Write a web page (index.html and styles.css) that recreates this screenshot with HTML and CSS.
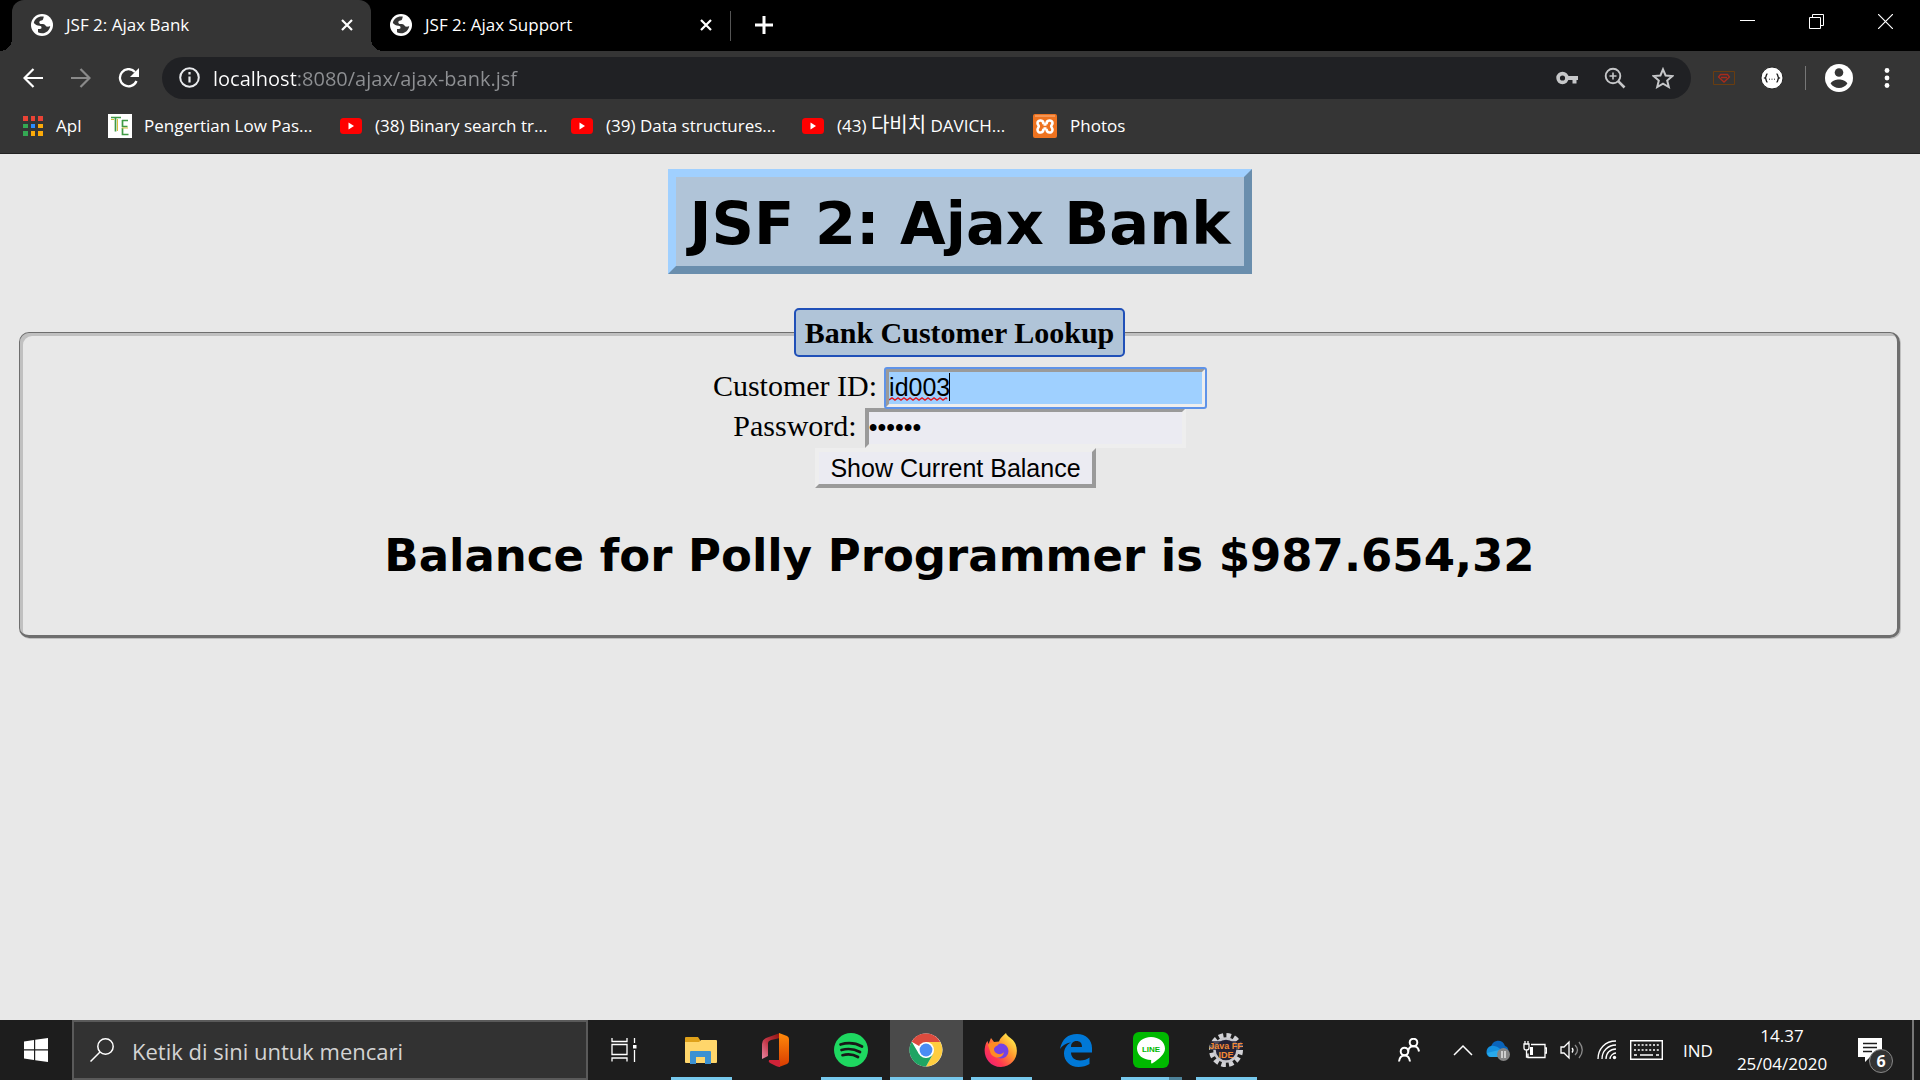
FILE: index.html
```html
<!DOCTYPE html>
<html lang="id">
<head>
<meta charset="utf-8">
<title>JSF 2: Ajax Bank</title>
<link rel="stylesheet" href="styles.css">
</head>
<body>
<svg class="defs" aria-hidden="true">
  <symbol id="globe" viewBox="0 0 22 22">
    <circle cx="11" cy="11" r="11" fill="#fff"/>
    <path d="M13 2.800C8 1.800 3.800 4.500 2.800 9c1.500 1.500 3.200 2.800 5.700 2.800 1.300 0 2 .7 2 1.900 0 1.500-2 1.300-3.500 1.300v3.300c1.200.7 2.600 1 4 1 4.300 0 7.800-3.200 8.200-7.300-1.500 1-4 1-4.700-.5-.7-1.400-2-1.500-4-1.500-1.500 0-2.200-.7-2.200-1.800 0-1.700 2-1.500 3-1.900 1.500-.6.500-2.500 1.700-3.500z" fill="#353535"/>
    <path d="M5 12.200c1 .8 3 .3 3.800 1.300.3 1-2.300 1-2.800 2.300z" fill="#fff"/>
  </symbol>
  <symbol id="cross" viewBox="0 0 12 12"><path d="M1 1l10 10M11 1L1 11" stroke="#fff" stroke-width="2.200"/></symbol>
  <symbol id="youtube" viewBox="0 0 22 16"><rect width="22" height="16" rx="3.500" fill="#f00"/><path d="M8.500 4.500v7L14 8z" fill="#fff"/></symbol>
</svg>

<header class="browser">
  <div class="tab-strip">
    <div class="tab tab-active">
      <svg class="favicon"><use href="#globe"/></svg>
      <span class="tab-title">JSF 2: Ajax Bank</span>
      <button class="tab-close" aria-label="Tutup tab"><svg width="12" height="12"><use href="#cross"/></svg></button>
    </div>
    <div class="tab">
      <svg class="favicon"><use href="#globe"/></svg>
      <span class="tab-title">JSF 2: Ajax Support</span>
      <button class="tab-close" aria-label="Tutup tab"><svg width="12" height="12"><use href="#cross"/></svg></button>
    </div>
    <span class="tab-divider"></span>
    <button class="new-tab" aria-label="Tab baru"><svg width="18" height="18" viewBox="0 0 18 18"><path d="M9 0v18M0 9h18" stroke="#fff" stroke-width="3"/></svg></button>
    <div class="window-controls">
      <button aria-label="Minimalkan"><svg width="15" height="15" viewBox="0 0 15 15"><path d="M0 6.500h15" stroke="#fff"/></svg></button>
      <button aria-label="Pulihkan"><svg width="15" height="15" viewBox="0 0 15 15"><path d="M.5 3.500h11v11H.5zM3.500 3.500v-3h11v11h-3" fill="none" stroke="#fff"/></svg></button>
      <button aria-label="Tutup"><svg width="15" height="15" viewBox="0 0 15 15"><path d="M0 0l15 15M15 0L0 15" stroke="#fff" stroke-width="1.200"/></svg></button>
    </div>
  </div>

  <div class="toolbar">
    <nav class="history">
      <button aria-label="Kembali"><svg width="20" height="20" viewBox="0 0 20 20"><path d="M20 10H2M10.500 1L1.500 10l9 9" fill="none" stroke="#fff" stroke-width="2.200"/></svg></button>
      <button aria-label="Maju"><svg width="20" height="20" viewBox="0 0 20 20"><path d="M0 10h18M9.500 1l9 9-9 9" fill="none" stroke="#8a8a8a" stroke-width="2.200"/></svg></button>
      <button aria-label="Muat ulang"><svg width="22" height="20" viewBox="0 0 22 20"><path d="M18.500 13A8.600 8.600 0 1 1 17 4" fill="none" stroke="#fff" stroke-width="2.300"/><path d="M21 0v9h-9z" fill="#fff"/></svg></button>
    </nav>
    <div class="omnibox">
      <svg width="21" height="21" viewBox="0 0 21 21"><circle cx="10.500" cy="10.500" r="9.300" fill="none" stroke="#e8eaed" stroke-width="2"/><path d="M10.500 9.500v6M10.500 5v2.400" stroke="#e8eaed" stroke-width="2.200"/></svg>
      <input class="address" type="text" aria-label="Alamat" value="localhost:8080/ajax/ajax-bank.jsf" spellcheck="false">
      <div class="omnibox-actions">
        <button aria-label="Sandi"><svg width="22" height="22" viewBox="0 0 22 22"><circle cx="6.500" cy="11" r="4.400" fill="none" stroke="#c6c7c9" stroke-width="3.600"/><path d="M11 9h11v4h-1.500v3.500h-4V13H11z" fill="#c6c7c9"/></svg></button>
        <button aria-label="Zoom"><svg width="22" height="22" viewBox="0 0 22 22"><circle cx="9" cy="9" r="7.300" fill="none" stroke="#c6c7c9" stroke-width="1.900"/><path d="M14.200 14.200l6.300 6.300" stroke="#c6c7c9" stroke-width="2.600"/><path d="M9 5.500v7M5.500 9h7" stroke="#c6c7c9" stroke-width="1.600"/></svg></button>
        <button aria-label="Beri bintang"><svg width="22" height="22" viewBox="0 0 22 22"><path d="M11 2.300l2.600 6.200 6.700.6-5.100 4.400 1.600 6.500L11 16.600l-5.800 3.400 1.600-6.500-5.100-4.400 6.700-.6z" fill="none" stroke="#c6c7c9" stroke-width="2"/></svg></button>
      </div>
    </div>
    <div class="extensions">
      <button aria-label="Ekstensi"><svg width="24" height="24" viewBox="0 0 24 24"><path d="M1.500 5.500h21v13h-21z" fill="none" stroke="#693d10"/><path d="M8.500 8.500h7l2 2.500-5.500 5-5.500-5zM9 11.500h6" fill="none" stroke="#a82b1c" stroke-width="1.300"/></svg></button>
      <button aria-label="Ekstensi JSON"><svg width="24" height="24" viewBox="0 0 24 24"><circle cx="12" cy="12" r="11" fill="#fff" stroke="#222" stroke-width="1"/><path d="M7.500 8c-2 0-.5 3-2.500 4 2 1 .5 4 2.500 4M16.500 8c2 0 .5 3 2.500 4-2 1-.5 4-2.500 4" fill="none" stroke="#222" stroke-width="1.400"/><path d="M9 13.200h1M11.500 13.200h1M14 13.200h1" stroke="#222" stroke-width="1"/></svg></button>
      <span class="toolbar-divider"></span>
      <button aria-label="Profil"><svg width="28" height="28" viewBox="0 0 28 28"><circle cx="14" cy="14" r="14" fill="#fff"/><circle cx="14" cy="8.500" r="4.300" fill="#353535"/><path d="M5.600 19.500C7 16.800 11 15.500 14 15.500s7 1.300 8.400 4c-2 2.800-5 4.500-8.400 4.500s-6.400-1.700-8.400-4.500z" fill="#353535"/></svg></button>
      <button aria-label="Menu"><svg width="6" height="22" viewBox="0 0 6 22"><circle cx="3" cy="3.500" r="2.400" fill="#fff"/><circle cx="3" cy="11" r="2.400" fill="#fff"/><circle cx="3" cy="18.500" r="2.400" fill="#fff"/></svg></button>
    </div>
  </div>

  <nav class="bookmarks">
    <a class="bookmark bookmark-apps" href="#"><svg width="20" height="20" viewBox="0 0 20 20"><path d="M0 0h5v5H0zM8 0h4v5H8zM15 0h5v5h-5z" fill="#ea4335"/><path d="M0 8h5v4H0zM0 15h5v5H0z" fill="#34a853"/><path d="M8 8h4v4H8z" fill="#2a8cff"/><path d="M15 8h5v4h-5zM8 15h4v5H8zM15 15h5v5h-5z" fill="#fbaa09"/></svg><span>Apl</span></a>
    <a class="bookmark bookmark-site" href="#"><svg width="24" height="24" viewBox="0 0 24 24"><path d="M0 0h24v24H0z" fill="#fff"/><path d="M3 3.500h10M7.500 4v13.500M14 6.500h6M14.500 6v6.500h5M14.500 14v6.500h6" fill="none" stroke="#3f9a45" stroke-width="1.700"/><path d="M9.500 5v12M14 14h6M3 5.500h3" fill="none" stroke="#d6bd3d"/></svg><span>Pengertian Low Pas...</span></a>
    <a class="bookmark" href="#"><svg width="22" height="16"><use href="#youtube"/></svg><span>(38) Binary search tr...</span></a>
    <a class="bookmark" href="#"><svg width="22" height="16"><use href="#youtube"/></svg><span>(39) Data structures...</span></a>
    <a class="bookmark" href="#"><svg width="22" height="16"><use href="#youtube"/></svg><span>(43) <span class="hangul" lang="ko">다비치</span> DAVICH...</span></a>
    <a class="bookmark" href="#"><svg width="24" height="24" viewBox="0 0 24 24"><rect width="24" height="24" rx="2" fill="#ee7320"/><path d="M2 2h20" stroke="#fbb98a" stroke-width="1"/><path d="M10.500 10.500h3M10.500 14.500h3M10.500 10.500C11 5.500 4.500 5.500 4.500 9c0 1.800 1.300 2 1.300 3.200s-1.300 1.800-1.300 3.600c0 4 6.500 3.700 6-1.300M13.500 10.500C13 5.500 19.500 5.500 19.500 9c0 1.800-1.300 2-1.300 3.200s1.300 1.800 1.300 3.600c0 4-6.500 3.700-6-1.300" fill="none" stroke="#fff" stroke-width="2.600"/></svg><span>Photos</span></a>
  </nav>
</header>

<main class="page">
  <h1 class="title">JSF 2: Ajax Bank</h1>
  <form class="lookup-form">
    <fieldset class="lookup">
      <legend>Bank Customer Lookup</legend>
      <div class="field-row">
        <label for="customer-id">Customer ID:</label>
        <span class="focused-field">
          <input class="field field-active" id="customer-id" type="text" value="id003" spellcheck="false">
          <svg class="squiggle" width="61" height="4" viewBox="0 0 61 4"><path d="M0 3l3-2 3 2 3-2 3 2 3-2 3 2 3-2 3 2 3-2 3 2 3-2 3 2 3-2 3 2 3-2 3 2 3-2 3 2 3-2 1 1" fill="none" stroke="#e01b24" stroke-width="1.500"/></svg>
          <span class="caret"></span>
        </span>
      </div>
      <div class="field-row">
        <label for="password">Password:</label>
        <input class="field" id="password" type="password" value="secret">
      </div>
      <div class="field-row field-row-button">
        <button class="submit" type="button">Show Current Balance</button>
      </div>
      <h2 class="balance">Balance for Polly Programmer is $987.654,32</h2>
    </fieldset>
  </form>
</main>

<footer class="taskbar">
  <button class="start" aria-label="Mulai"><svg width="24" height="24" viewBox="0 0 24 24"><path d="M0 3.500L10 2v9.300H0zM11.200 1.800L24 0v11.300H11.200zM0 12.500h10V22L0 20.600zM11.200 12.500H24V24l-12.800-1.800z" fill="#fff"/></svg></button>
  <div class="search">
    <svg width="24" height="24" viewBox="0 0 24 24"><circle cx="15.500" cy="8.500" r="7.700" fill="none" stroke="#fff" stroke-width="1.500"/><path d="M10 14L.5 23.500" stroke="#fff" stroke-width="1.500"/></svg>
    <input type="text" aria-label="Cari" placeholder="Ketik di sini untuk mencari">
  </div>
  <div class="apps">
    <button class="app task-view" aria-label="Tampilan tugas"><svg width="26" height="24" viewBox="0 0 26 24"><path d="M1 0v3.500h15V0M1 23.500V20h15v3.500M1 6.500h15v10H1zM23.500 0v5M23.500 12v12" fill="none" stroke="#fff" stroke-width="1.300"/><path d="M22 7h3.500v3.500H22z" fill="#fff"/></svg></button>
    <button class="app running" aria-label="File Explorer"><svg width="32" height="28" viewBox="0 0 32 28"><path d="M0 2q0-1 1-1h12l2 3v4H0z" fill="#dfa11a"/><path d="M0 6h14l2-2h15q1 0 1 1v21q0 1-1 1H1q-1 0-1-1z" fill="#ffd66b"/><path d="M5 28V16q0-1 1-1h19q1 0 1 1v12h-6v-7h-9v7z" fill="#3c91d2"/></svg></button>
    <button class="app" aria-label="Office"><svg width="30" height="34" viewBox="0 0 30 34"><defs><linearGradient id="office-left" x1="0" y1="1" x2="1" y2="0"><stop stop-color="#e889a5"/><stop offset=".45" stop-color="#c43748"/><stop offset="1" stop-color="#8c120d"/></linearGradient><linearGradient id="office-right" x1="0" y1="0" x2="0" y2="1"><stop stop-color="#ff8a0a"/><stop offset="1" stop-color="#d83b01"/></linearGradient></defs><path d="M19 0L5 5Q1 7 1 11v15l6-3V10q0-2 3-3l9-2z" fill="url(#office-left)"/><path d="M18 0l8 3q2 1 2 3v22q0 2-2 3l-8 3V4z" fill="url(#office-right)"/><path d="M8 27h11v7q-2 0-4-1l-6-3q-2-1-1-3z" fill="#cf2338"/></svg></button>
    <button class="app running" aria-label="Spotify"><svg width="34" height="34" viewBox="0 0 34 34"><circle cx="17" cy="17" r="17" fill="#1ed760"/><path d="M6.500 11.500c7-2 15-1.500 21.500 2M7.500 17c6-1.700 13-1 18.500 2M8.500 22.200c5.300-1.400 11-.8 15.500 1.800" fill="none" stroke="#181818" stroke-width="2.700" stroke-linecap="round"/></svg></button>
    <button class="app running current" aria-label="Chrome"><svg width="34" height="34" viewBox="0 0 34 34"><circle cx="17" cy="17" r="16.500" fill="#fff"/><path d="M17 17L2.700 8.700A16.500 16.500 0 0 1 31.300 9H17z" fill="#dc4b3e"/><path d="M17 9h14.300A16.500 16.500 0 0 1 17 33.500L24 21z" fill="#ffcd40"/><path d="M2.700 8.700A16.500 16.500 0 0 0 17 33.500L24 21l-7 4-7-4z" fill="#1fa463"/><circle cx="17" cy="17" r="8" fill="#fff"/><circle cx="17" cy="17" r="6.400" fill="#4a8cf5"/></svg></button>
    <button class="app running" aria-label="Firefox"><svg width="34" height="34" viewBox="0 0 34 34"><defs><linearGradient id="fox" x1="1" y1="0" x2="0" y2="1"><stop offset=".1" stop-color="#fff44f"/><stop offset=".4" stop-color="#ff9a2e"/><stop offset=".7" stop-color="#ff3750"/><stop offset="1" stop-color="#e31587"/></linearGradient></defs><path d="M22 0c1 4 7 5 9.500 11C36 22 29 34 17 34S-1 23 1 14c.5-3 1.500-5 2.500-6l1 3L7 5l3 4 5-.5C16 5 19 3 22 0z" fill="url(#fox)"/><circle cx="17" cy="18" r="7.500" fill="#7542e5"/><path d="M4 12c4-4 8-3 11-2 0 3-5 3-5 6 0 5 7 7 10 3-1 8-13 7-14-1z" fill="#ff8a25"/></svg></button>
    <button class="app" aria-label="Edge"><svg width="32" height="33" viewBox="0 0 32 33"><path d="M0 15C2 5 8 0 17 0c9 0 15 6 15 14v4.500H11c0 5 4 8 9 8 4 0 7-1 9.500-3V30c-3 2-7 3-11 3C10 33 4 27 4 19.500c0-5 3-9 7-11C6 9 2 12 0 15zm11-2h11c0-4-2-6-5.500-6S11 9.500 11 13z" fill="#0078d7"/></svg></button>
    <button class="app running grouped" aria-label="LINE"><svg width="36" height="36" viewBox="0 0 36 36"><rect width="36" height="36" rx="6" fill="#00b900"/><path d="M18 5c8 0 14 5 14 11.500 0 5-5 10-13 15-1 .5-1-1-.8-3.500C10 28 4 23 4 16.500 4 10 10 5 18 5z" fill="#fff"/><text class="line-mark" x="18" y="20">LINE</text></svg></button>
    <button class="app running" aria-label="Java FF IDE"><svg width="34" height="34" viewBox="0 0 34 34"><circle cx="17" cy="17" r="14.500" fill="none" stroke="#d2d2d6" stroke-width="5" stroke-dasharray="4.500 3.090"/><circle cx="17" cy="17" r="11.500" fill="#242235" stroke="#c7c7cc" stroke-width="2.500"/><path d="M1 8h32v9H1z" fill="#242235" opacity=".75"/><text class="ide-mark" x="17" y="16">Java FF</text><text class="ide-mark" x="17" y="25">IDE</text></svg></button>
  </div>
  <div class="tray">
    <svg class="people" width="22" height="24" viewBox="0 0 22 24"><circle cx="15.500" cy="4.500" r="3.800"/><path d="M10 13.500c1-7 10-7 11 0"/><circle cx="6.500" cy="13.500" r="3.800"/><path d="M1 23.500c1-8 10-8 11 0"/></svg>
    <div class="tray-icons">
      <svg width="20" height="12" viewBox="0 0 20 12"><path d="M1 11l9-9 9 9" fill="none" stroke="#fff" stroke-width="1.500"/></svg>
      <svg width="24" height="22" viewBox="0 0 24 22"><path d="M5 8C7 0 17 0 19 7c3 1 4 4 3 7l-8 3L3 14z" fill="#0a64ba"/><path d="M5 7c6-1 10 4 16 8l-3 3H5C-1 18-1 8 5 7z" fill="#1490df"/><path d="M1 14l12-3 7 6-2 1H5q-3-1-4-4z" fill="#28a8ea"/><circle cx="17.500" cy="15.500" r="6.500" fill="#858585"/><path d="M16 12v7M19 12v7" stroke="#fff" stroke-width="1.200"/></svg>
      <svg width="24" height="18" viewBox="0 0 24 18"><path d="M8 3.500h14v13H5v-4M22 7h1.500v5H22M2 0v3M5 0v3M1 3h5v4q0 2-2.500 2T1 7zM3.500 9v7H5" fill="none" stroke="#fff" stroke-width="1.300"/><path d="M7 6h3v8H7z" fill="#fff"/></svg>
      <svg width="24" height="20" viewBox="0 0 24 20"><path d="M1 7h3l5-5v16l-5-5H1z" fill="none" stroke="#fff" stroke-width="1.300"/><path d="M12 8q2 2 0 4.500" fill="none" stroke="#fff" stroke-width="1.300"/><path d="M15 5q5 5 0 10M19 2q6.500 8 0 16" fill="none" stroke="#8a8a8a" stroke-width="1.300"/></svg>
      <svg width="20" height="20" viewBox="0 0 20 20"><path d="M1 19C1 9 8 1 19 1M5 19C5 11 11 5 19 5M9 19C9 13 13 9 19 9M13 19c0-3 3-6 6-6" fill="none" stroke="#fff" stroke-width="1.300"/><circle cx="17.500" cy="17.500" r="1.700" fill="#fff"/></svg>
      <svg width="33" height="20" viewBox="0 0 33 20"><path d="M.7.7h31.600v18.600H.7z" fill="none" stroke="#fff" stroke-width="1.400"/><path d="M4 5h25M4 10h25" stroke="#fff" stroke-width="1.500" stroke-dasharray="2 1.800"/><path d="M4 15h3M10 15h13M26 15h3" stroke="#fff" stroke-width="1.500"/></svg>
    </div>
    <span class="language">IND</span>
    <time class="clock" datetime="2020-04-25T14:37"><span>14.37</span><span>25/04/2020</span></time>
    <button class="notifications" aria-label="Notifikasi">
      <svg width="24" height="24" viewBox="0 0 24 24"><path d="M0 0h24v19H12l-5 5v-5H0z" fill="#fff"/><path d="M5 5.500h14M5 9.500h14M5 13.500h9" stroke="#1d1d1d" stroke-width="1.300"/></svg>
      <span class="badge">6</span>
    </button>
    <span class="show-desktop"></span>
  </div>
</footer>
</body>
</html>
```
FILE: styles.css
```css
* { box-sizing: border-box; }

html, body { height: 100%; }

body {
  margin: 0;
  display: flex;
  flex-direction: column;
  overflow: hidden;
  background: #e8e8e8;
  color: #000;
  font-family: "Open Sans", "Noto Sans CJK KR", sans-serif;
}

svg { display: block; flex: none; }

button {
  display: flex;
  align-items: center;
  justify-content: center;
  flex: none;
  margin: 0;
  padding: 0;
  border: 0;
  background: none;
  color: inherit;
}

.defs { position: absolute; width: 0; height: 0; }

/* Browser frame */
.browser {
  flex: none;
  background: #353535;
  color: #fff;
  border-bottom: 1px solid #222;
}

.tab-strip {
  display: flex;
  height: 51px;
  padding-left: 12px;
  background: #000;
}

.tab {
  display: flex;
  align-items: center;
  flex: none;
  width: 359px;
  padding: 0 18px 2px 19px;
  font-size: 17px;
}

.tab-active {
  position: relative;
  background: #353535;
  border-radius: 12px 12px 0 0;
}

.tab-active::before,
.tab-active::after {
  content: "";
  position: absolute;
  bottom: 0;
  width: 12px;
  height: 12px;
}

.tab-active::before {
  left: -12px;
  background: radial-gradient(circle at 0 0, #000 12px, #353535 12px);
}

.tab-active::after {
  right: -12px;
  background: radial-gradient(circle at 100% 0, #000 12px, #353535 12px);
}

.favicon { width: 22px; height: 22px; }
.tab-title { flex: 1; margin-left: 13px; }
.tab-divider { width: 1px; height: 30px; margin-top: 11px; background: #555; }
.new-tab { width: 65px; padding-bottom: 2px; }

.window-controls {
  display: flex;
  margin-left: auto;
  height: 43px;
}

.window-controls button { width: 69px; }

.toolbar {
  display: flex;
  align-items: center;
  height: 53px;
  padding-right: 30px;
}

.history { display: flex; padding-left: 9px; }
.history button { width: 48px; height: 48px; }

.omnibox {
  display: flex;
  align-items: center;
  flex: 1;
  height: 42px;
  margin-left: 9px;
  padding: 0 17px;
  border-radius: 21px;
  background: #202124;
}

.address {
  flex: 1;
  min-width: 0;
  margin-left: 13px;
  padding: 2px 0 0;
  border: 0;
  outline: 0;
  font: 20px "Open Sans", sans-serif;
  color: transparent;
  background: linear-gradient(90deg, #fff 84px, #8e9093 84px);
  -webkit-background-clip: text;
  background-clip: text;
}

.omnibox-actions { display: flex; gap: 26px; }

.extensions { display: flex; align-items: center; margin-left: 21px; }
.extensions button + button { margin-left: 24px; }
.toolbar-divider { width: 1px; height: 24px; margin: 0 19px 0 21px; background: #777; }
.toolbar-divider + button + button { margin-left: 31px; }

.bookmarks {
  display: flex;
  height: 49px;
  padding: 0 23px 6px;
}

.bookmark {
  display: flex;
  align-items: center;
  gap: 13px;
  flex: none;
  width: 231px;
  color: #fff;
  font-size: 17px;
  line-height: 24px;
  text-decoration: none;
  white-space: nowrap;
}

.bookmark-apps { width: 85px; }
.bookmark-site { width: 232px; gap: 12px; }
.hangul { font-size: 20px; line-height: 20px; }

/* Bank page */
.page {
  flex: 1;
  min-height: 0;
  padding: 15px 19px 0;
  font-family: "Liberation Serif", serif;
  font-size: 30px;
  text-align: center;
}

.title {
  width: fit-content;
  margin: 0 auto;
  padding: 10px 14px 6px;
  border: 8px solid;
  border-color: #a0d0ff #6a8ead #6a8ead #a0d0ff;
  background: #b0c4d8;
  font: bold 59px/73px "DejaVu Sans", sans-serif;
}

.lookup-form { margin-top: 34px; }

.lookup {
  min-width: 0;
  margin: 0 1px 0 0;
  padding: 11px 20px 51px 22px;
  border: solid #6e6e6e;
  border-width: 1px 3px 3px 1px;
  border-radius: 10px;
  box-shadow: inset 3px 3px #c0c0c0, 1px 1px #c0c0c0;
}

.lookup legend {
  margin: 0 auto;
  padding: 5px 9px;
  border: 2px solid #2050b8;
  border-radius: 5px;
  background: #b0c4d8;
  font-weight: bold;
  line-height: 35px;
}

.field-row {
  display: flex;
  align-items: center;
  justify-content: center;
  gap: 8px;
  height: 40px;
}

.field-row label { padding-bottom: 4px; }

.field {
  display: block;
  width: 321px;
  height: 40px;
  margin: 0;
  padding: 0 0 2px;
  border: 4px solid;
  border-color: #9a9a9a #eee #eee #9a9a9a;
  background: #ebebf2;
  color: #000;
  font: 25px "Liberation Sans", sans-serif;
}

.focused-field {
  position: relative;
  display: block;
}

.field-active {
  background: #9fd0ff;
  outline: 2px solid #5f93e8;
  outline-offset: -1px;
  border-radius: 2px;
}

.squiggle { position: absolute; left: 4px; bottom: 7px; }

.caret {
  position: absolute;
  left: 64px;
  top: 5px;
  width: 1px;
  height: 28px;
  background: #000;
}

.field-row-button { padding-right: 8px; }

.submit {
  height: 40px;
  padding: 0 11px;
  border: 4px solid;
  border-color: #eee #9a9a9a #9a9a9a #eee;
  background: #ebebf2;
  font: 25px "Liberation Sans", sans-serif;
}

.balance {
  margin: 40px 0 0;
  font: bold 45px/56px "DejaVu Sans", sans-serif;
}

/* Taskbar */
.taskbar {
  display: flex;
  flex: none;
  height: 60px;
  background: #1d1d1d;
  color: #fff;
}

.start { width: 72px; }

.search {
  display: flex;
  align-items: center;
  width: 516px;
  padding: 0 16px;
  gap: 18px;
  border: 2px solid #5a5a5a;
  background: #323232;
}

.search input {
  flex: 1;
  min-width: 0;
  padding: 2px 0 0;
  border: 0;
  outline: 0;
  background: none;
  font: 22px "Open Sans", sans-serif;
}

.search input::placeholder { color: #d4d4d4; opacity: 1; }

.apps { display: flex; padding-left: 1px; }

.app {
  position: relative;
  width: 75px;
  padding-right: 2px;
}

.task-view { padding-right: 6px; }

.running::after {
  content: "";
  position: absolute;
  left: 7px;
  right: 7px;
  bottom: 0;
  height: 3px;
  background: #76c8ec;
}

.current { background: #4a4a4a; border: solid #1d1d1d; border-width: 0 1px; }
.current::after { left: 0; right: 0; }
.grouped::after { background: linear-gradient(90deg, #76c8ec 48px, #4d8299 48px); }

.line-mark { fill: #00b900; font: bold 8px "Liberation Sans", sans-serif; text-anchor: middle; }
.ide-mark { fill: #f58a35; font: bold 9px "Liberation Sans", sans-serif; text-anchor: middle; }

.tray {
  display: flex;
  align-items: center;
  margin-left: auto;
  font-size: 17px;
}

.people { fill: none; stroke: #fff; stroke-width: 2; }
.tray-icons { display: flex; align-items: center; gap: 13px; margin: 0 20px 0 33px; }

.clock {
  display: flex;
  flex-direction: column;
  width: 94px;
  margin: 0 29px 0 22px;
  line-height: 28px;
  text-align: center;
}

.language { width: 30px; }

.notifications { position: relative; }

.badge {
  position: absolute;
  left: 11px;
  top: 11px;
  width: 24px;
  height: 24px;
  border: 1px solid #888;
  border-radius: 12px;
  background: #333;
  font: bold 16px/22px "Open Sans", sans-serif;
}

.show-desktop {
  align-self: stretch;
  width: 8px;
  margin-left: 30px;
  border-left: 2px solid #777;
}
```
